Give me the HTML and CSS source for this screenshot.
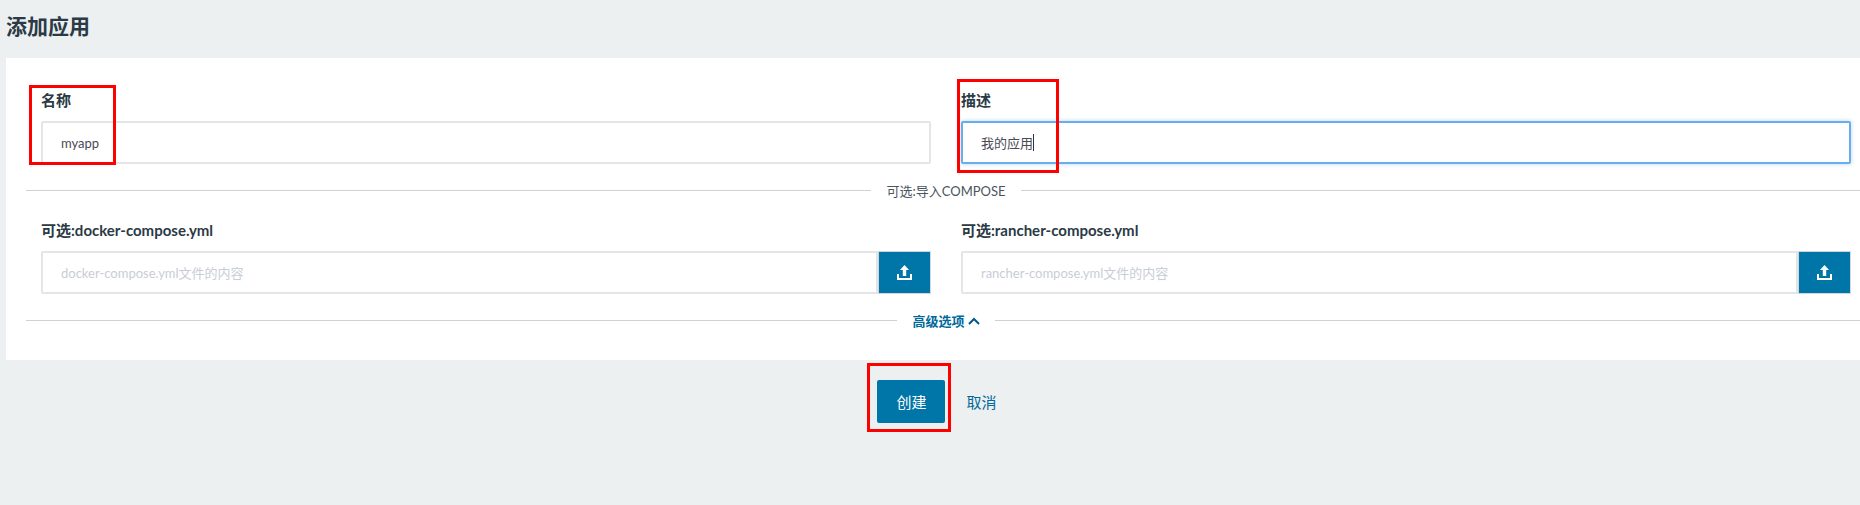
FILE: index.html
```html
<!DOCTYPE html>
<html lang="zh-CN">
<head>
<meta charset="utf-8">
<title>添加应用</title>
<link rel="stylesheet" href="styles.css">
</head>
<body>
<main class="page">
  <h1 class="title">添加应用</h1>
  <section class="card">
    <div class="row row-top">
      <div class="field">
        <label class="label">名称</label>
        <input class="input" type="text" value="myapp">
      </div>
      <div class="field">
        <label class="label">描述</label>
        <div class="input-wrap">
          <input class="input input-focus" type="text" value="我的应用">
          <span class="caret"></span>
        </div>
      </div>
    </div>
    <div class="divider divider-import"><span class="divider-text">可选:导入COMPOSE</span></div>
    <div class="row row-compose">
      <div class="field">
        <label class="label">可选:docker-compose.yml</label>
        <div class="group">
          <input class="input" type="text" placeholder="docker-compose.yml文件的内容">
          <button class="upload" type="button" aria-label="上传">
            <svg class="upload-icon" viewBox="0 0 15 15"><path d="M7.5 0 12 5H9.2v6H5.8V5H3z" fill="#fff"/><path d="M1 9v5h13V9" fill="none" stroke="#fff" stroke-width="2"/></svg>
          </button>
        </div>
      </div>
      <div class="field">
        <label class="label">可选:rancher-compose.yml</label>
        <div class="group">
          <input class="input" type="text" placeholder="rancher-compose.yml文件的内容">
          <button class="upload" type="button" aria-label="上传">
            <svg class="upload-icon" viewBox="0 0 15 15"><path d="M7.5 0 12 5H9.2v6H5.8V5H3z" fill="#fff"/><path d="M1 9v5h13V9" fill="none" stroke="#fff" stroke-width="2"/></svg>
          </button>
        </div>
      </div>
    </div>
    <div class="divider divider-advanced">
      <a class="divider-text advanced-link">高级选项
        <svg class="chevron" viewBox="0 0 12 8"><path d="M1 7 6 2l5 5" fill="none" stroke="currentColor" stroke-width="2"/></svg>
      </a>
    </div>
  </section>
  <div class="actions">
    <button class="btn-primary" type="button">创建</button>
    <a class="btn-link">取消</a>
  </div>
  <span class="mark mark-name"></span>
  <span class="mark mark-desc"></span>
  <span class="mark mark-create"></span>
</main>
</body>
</html>
```

FILE: styles.css
```css
* { box-sizing: border-box; }
html, body { margin: 0; height: 100%; }
body {
  background: #ecf0f1;
  color: #2b3a45;
  font-family: Lato, "Noto Sans CJK SC", sans-serif;
  font-size: 14px;
  overflow: hidden;
}
.page { position: relative; height: 505px; padding-left: 6px; overflow: hidden; }
.title { margin: 0; height: 58px; padding-top: 12px; font-size: 21px; line-height: 28px; font-weight: 700; color: #2b3a45; }
.card { width: 1880px; height: 302px; padding: 30px 20px 0; background: #fff; }
.row { display: grid; grid-template-columns: 890px 890px; column-gap: 30px; padding-left: 15px; }
.row-compose { margin-top: 27px; }
.field { min-width: 0; }
.label { display: block; height: 33px; font-size: 15px; line-height: 24px; font-weight: 700; color: #2b3a45; }
.input-wrap { position: relative; }
.input {
  display: block;
  width: 100%;
  height: 43px;
  padding: 0 18px;
  border: 2px solid #e3e6e7;
  border-radius: 2px;
  background: #fff;
  color: #4a4a55;
  font: 13px Lato, "Noto Sans CJK SC", sans-serif;
  outline: none;
}
.input::placeholder { color: #c9cdd6; opacity: 1; }
.input-focus { border-color: #67aeea; box-shadow: 0 0 4px rgba(103, 174, 234, .5); }
.caret { position: absolute; left: 72px; top: 13px; width: 1px; height: 17px; background: #333; }
.divider { position: relative; display: flex; justify-content: center; align-items: center; height: 1px; margin-top: 26px; background: #ced2d4; }
.divider-text { padding: 0 15px; background: #fff; line-height: 20px; font-size: 13px; color: #4a5560; white-space: nowrap; }
.advanced-link { display: flex; align-items: center; gap: 3px; font-weight: 700; color: #00699b; font-size: 13px; }
.chevron { width: 12px; height: 8px; color: #00598a; }
.group { display: flex; }
.group .input { flex: 1; min-width: 0; border-radius: 2px 0 0 2px; }
.upload { display: flex; align-items: center; justify-content: center; flex: none; width: 53px; height: 43px; padding: 0; border: 1px solid #d3d7d9; background: #0075a8; }
.upload-icon { width: 15px; height: 15px; }
.actions { display: flex; justify-content: center; align-items: center; gap: 21px; width: 1880px; padding: 20px 18px 0 0; }
.btn-primary { width: 68px; height: 43px; border: 0; border-radius: 2px; background: #0075a8; color: #fff; font: 15px Lato, "Noto Sans CJK SC", sans-serif; }
.btn-link { font-size: 15px; color: #00699b; }
.mark { position: absolute; border: 3px solid #f00; }
.mark-name { left: 29px; top: 85px; width: 87px; height: 80px; }
.mark-desc { left: 957px; top: 79px; width: 102px; height: 94px; }
.mark-create { left: 867px; top: 363px; width: 84px; height: 69px; }
```
